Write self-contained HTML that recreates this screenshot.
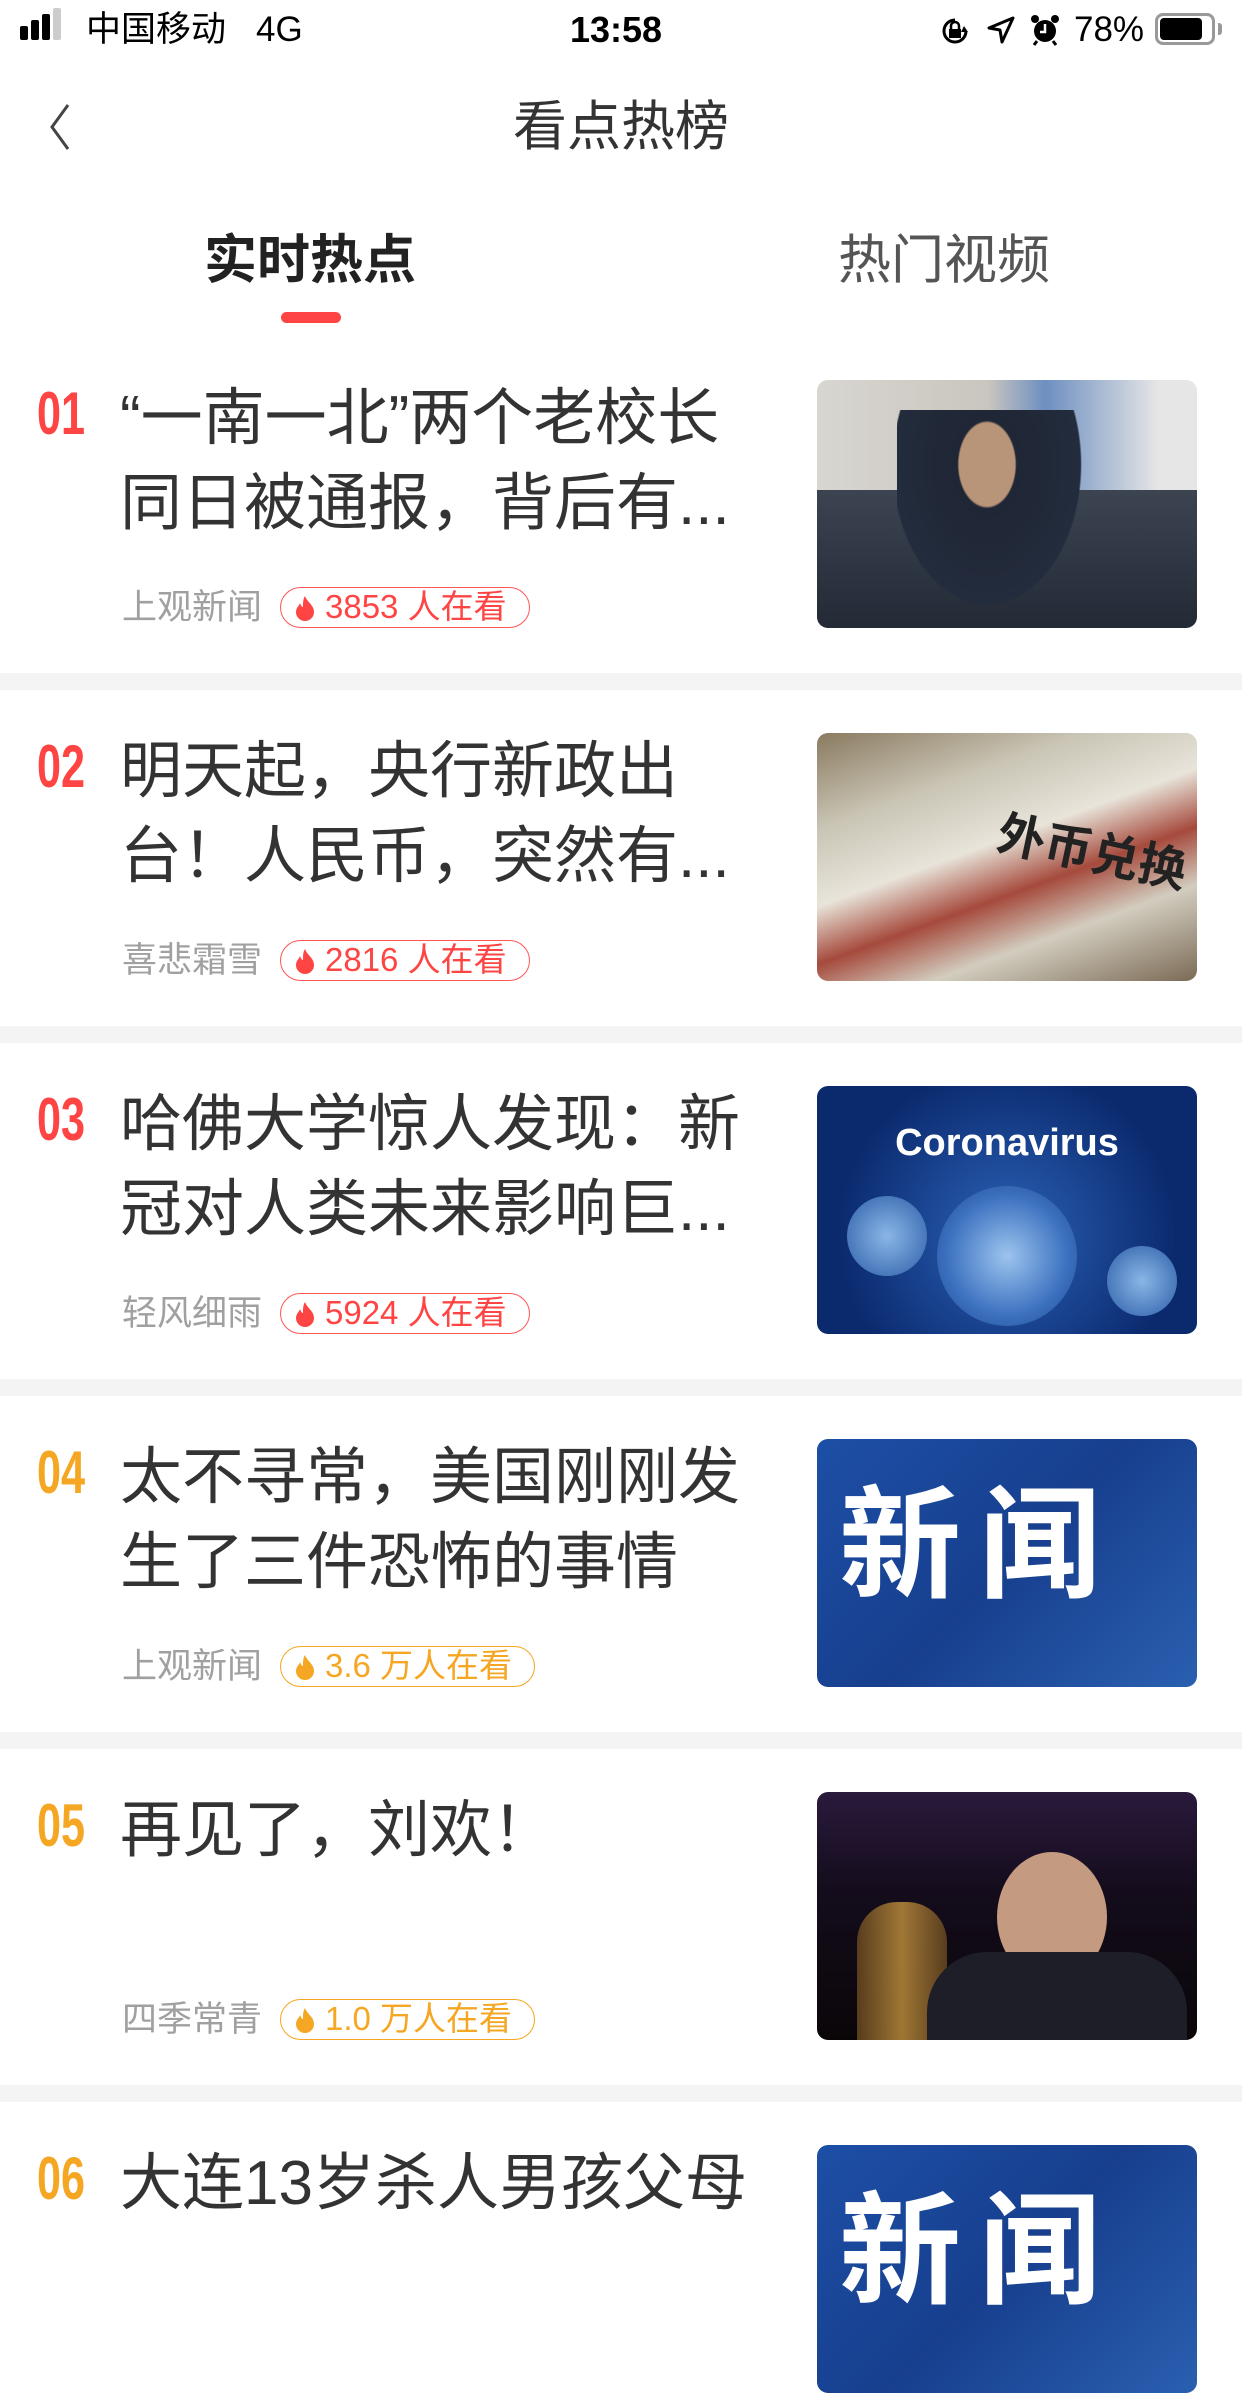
<!DOCTYPE html>
<html><head><meta charset="utf-8">
<style>
*{margin:0;padding:0;box-sizing:border-box}
body{width:1242px;height:2208px;overflow:hidden;background:#fff;font-family:"Liberation Sans","Noto Sans CJK SC",sans-serif;color:#333;position:relative}
.abs{position:absolute}
.sb{font-size:35px;color:#000;top:8px;line-height:44px}
.rank{position:absolute;left:37px;font-size:60px;line-height:60px;font-weight:bold;font-family:"Liberation Sans",sans-serif;transform:scaleX(.72);transform-origin:left top}
.title{position:absolute;left:120px;width:680px;font-size:62px;line-height:85px;color:#333;white-space:nowrap}
.src{position:absolute;left:122px;font-size:35px;color:#a0a0a0;line-height:41px}
.badge{position:absolute;left:280px;height:41px;border:1.5px solid;border-radius:21px;font-size:33px;line-height:38px;padding-left:44px;padding-right:22px;white-space:nowrap}
.badge svg{position:absolute;left:13px;top:7px}
.img{position:absolute;left:817px;width:380px;height:248px;border-radius:11px;overflow:hidden}
.sep{position:absolute;left:0;width:1242px;height:17px;background:#f4f4f4}
.red{color:#f44}.org{color:#f5a623}
.bred{border-color:#f55;color:#f44}.borg{border-color:#f5a623;color:#f5a623}
</style></head><body>
<!-- status bar -->
<div class="abs" style="left:20px;top:26px;width:8px;height:14px;background:#000;border-radius:2px"></div>
<div class="abs" style="left:31px;top:20px;width:8px;height:20px;background:#000;border-radius:2px"></div>
<div class="abs" style="left:42px;top:14px;width:8px;height:26px;background:#000;border-radius:2px"></div>
<div class="abs" style="left:53px;top:8px;width:8px;height:32px;background:#ccc;border-radius:2px"></div>
<div class="abs sb" style="left:86px">中国移动</div>
<div class="abs sb" style="left:256px">4G</div>
<div class="abs sb" style="left:570px;font-weight:bold;font-size:36px">13:58</div>
<svg class="abs" style="left:938px;top:14px" width="34" height="34" viewBox="0 0 34 34"><path d="M28 17A11 11 0 1 1 17 6" fill="none" stroke="#000" stroke-width="3"/><path d="M26 12l4 6-7 0z" fill="#000"/><rect x="11" y="15" width="12" height="9" fill="#000"/><path d="M13 15v-3a4 4 0 0 1 8 0v3" fill="none" stroke="#000" stroke-width="2.5"/></svg>
<svg class="abs" style="left:986px;top:15px" width="30" height="30" viewBox="0 0 30 30"><path d="M27 3L3 13l11 2 2 12z" fill="none" stroke="#000" stroke-width="3" stroke-linejoin="round"/></svg>
<svg class="abs" style="left:1030px;top:13px" width="30" height="34" viewBox="0 0 30 34"><circle cx="15" cy="18" r="11" fill="#000"/><circle cx="5" cy="6" r="4" fill="#000"/><circle cx="25" cy="6" r="4" fill="#000"/><path d="M15 11v8h-5" stroke="#fff" stroke-width="2.5" fill="none"/><path d="M7 28l-3 4M23 28l3 4" stroke="#000" stroke-width="3"/></svg>
<div class="abs sb" style="left:1074px">78%</div>
<div class="abs" style="left:1155px;top:13px;width:60px;height:32px;border:3px solid #999;border-radius:8px"></div>
<div class="abs" style="left:1160px;top:18px;width:42px;height:22px;background:#000;border-radius:4px"></div>
<div class="abs" style="left:1218px;top:23px;width:4px;height:12px;background:#999;border-radius:0 3px 3px 0"></div>
<!-- nav -->
<svg class="abs" style="left:44px;top:102px" width="30" height="50" viewBox="0 0 30 50"><path d="M24 3L8 25l16 22" fill="none" stroke="#444" stroke-width="3"/></svg>
<div class="abs" style="left:0;width:1242px;top:92px;text-align:center;font-size:54px;line-height:70px;color:#333">看点热榜</div>
<!-- tabs -->
<div class="abs" style="left:204px;top:226px;font-size:53px;line-height:70px;font-weight:bold;color:#222">实时热点</div>
<div class="abs" style="left:838px;top:226px;font-size:53px;line-height:70px;color:#555">热门视频</div>
<div class="abs" style="left:281px;top:312px;width:60px;height:11px;background:#f44;border-radius:6px"></div>

<!-- item 1 -->
<div class="rank red" style="top:384px">01</div>
<div class="title" style="top:376px">“一南一北”两个老校长<br>同日被通报，背后有...</div>
<div class="src" style="top:587px">上观新闻</div>
<div class="badge bred" style="top:587px"><svg width="22" height="26" viewBox="0 0 22 26"><path d="M11 1C13 7 20 10 20 17a9 9 0 0 1-18 0c0-4 3-6 4-9 1 3 2 4 3 4 0-4 0-8 2-11z" fill="currentColor"/></svg>3853 人在看</div>
<div class="img" style="top:380px;background:linear-gradient(90deg,#d8d6d0 0%,#c9c6bf 45%,#6d8fc0 60%,#e6e6e6 90%)"><div class="abs" style="left:0;top:110px;width:380px;height:138px;background:linear-gradient(180deg,#3c4452,#232a36)"></div><div class="abs" style="left:80px;top:30px;width:200px;height:218px;background:radial-gradient(ellipse at 45% 25%,#b89478 0 18%,#1f2635 19%,#232c3d 60%,transparent 61%)"></div></div>
<div class="sep" style="top:673px"></div>

<!-- item 2 -->
<div class="rank red" style="top:737px">02</div>
<div class="title" style="top:729px">明天起，央行新政出<br>台！人民币，突然有...</div>
<div class="src" style="top:940px">喜悲霜雪</div>
<div class="badge bred" style="top:940px"><svg width="22" height="26" viewBox="0 0 22 26"><path d="M11 1C13 7 20 10 20 17a9 9 0 0 1-18 0c0-4 3-6 4-9 1 3 2 4 3 4 0-4 0-8 2-11z" fill="currentColor"/></svg>2816 人在看</div>
<div class="img" style="top:733px;background:linear-gradient(160deg,#8a7a60 0%,#c9c4b4 25%,#e8e4da 45%,#a54a3c 60%,#d2cdbf 75%,#7b6a55 100%)"><div class="abs" style="left:180px;top:80px;font-size:48px;color:#222;font-weight:bold;transform:rotate(12deg);white-space:nowrap">外币兑换</div></div>
<div class="sep" style="top:1026px"></div>

<!-- item 3 -->
<div class="rank red" style="top:1090px">03</div>
<div class="title" style="top:1082px">哈佛大学惊人发现：新<br>冠对人类未来影响巨...</div>
<div class="src" style="top:1293px">轻风细雨</div>
<div class="badge bred" style="top:1293px"><svg width="22" height="26" viewBox="0 0 22 26"><path d="M11 1C13 7 20 10 20 17a9 9 0 0 1-18 0c0-4 3-6 4-9 1 3 2 4 3 4 0-4 0-8 2-11z" fill="currentColor"/></svg>5924 人在看</div>
<div class="img" style="top:1086px;background:radial-gradient(circle at 50% 60%,#2b62b8,#0b2a6e 70%)"><div class="abs" style="left:0;width:380px;top:36px;text-align:center;color:#fff;font-size:38px;font-weight:bold">Coronavirus</div><div class="abs" style="left:120px;top:100px;width:140px;height:140px;border-radius:50%;background:radial-gradient(circle,#9cc4ee,#3d72c0 60%,#1a4590)"></div><div class="abs" style="left:30px;top:110px;width:80px;height:80px;border-radius:50%;background:radial-gradient(circle,#8ab6e6,#2c5ea8)"></div><div class="abs" style="left:290px;top:160px;width:70px;height:70px;border-radius:50%;background:radial-gradient(circle,#8ab6e6,#2c5ea8)"></div></div>
<div class="sep" style="top:1379px"></div>

<!-- item 4 -->
<div class="rank org" style="top:1443px">04</div>
<div class="title" style="top:1435px">太不寻常，美国刚刚发<br>生了三件恐怖的事情</div>
<div class="src" style="top:1646px">上观新闻</div>
<div class="badge borg" style="top:1646px"><svg width="22" height="26" viewBox="0 0 22 26"><path d="M11 1C13 7 20 10 20 17a9 9 0 0 1-18 0c0-4 3-6 4-9 1 3 2 4 3 4 0-4 0-8 2-11z" fill="currentColor"/></svg>3.6 万人在看</div>
<div class="img" style="top:1439px;background:linear-gradient(135deg,#1d4fa6,#173f8e 50%,#2a5fb0)"><div class="abs" style="left:22px;top:42px;font-size:122px;font-weight:bold;color:#fff;letter-spacing:18px;line-height:130px">新闻</div></div>
<div class="sep" style="top:1732px"></div>

<!-- item 5 -->
<div class="rank org" style="top:1796px">05</div>
<div class="title" style="top:1788px">再见了，刘欢！</div>
<div class="src" style="top:1999px">四季常青</div>
<div class="badge borg" style="top:1999px"><svg width="22" height="26" viewBox="0 0 22 26"><path d="M11 1C13 7 20 10 20 17a9 9 0 0 1-18 0c0-4 3-6 4-9 1 3 2 4 3 4 0-4 0-8 2-11z" fill="currentColor"/></svg>1.0 万人在看</div>
<div class="img" style="top:1792px;background:linear-gradient(180deg,#2a1a3c 0%,#140c1c 40%,#0a0608 100%)"><div class="abs" style="left:40px;top:110px;width:90px;height:138px;background:linear-gradient(90deg,#6a4a20,#c4923e,#6a4a20);border-radius:40px 40px 0 0;opacity:.8"></div><div class="abs" style="left:180px;top:60px;width:110px;height:130px;border-radius:50%;background:#c49a80"></div><div class="abs" style="left:110px;top:160px;width:260px;height:100px;border-radius:60px 60px 0 0;background:#1e1e28"></div></div>
<div class="sep" style="top:2085px"></div>

<!-- item 6 -->
<div class="rank org" style="top:2149px">06</div>
<div class="title" style="top:2141px">大连13岁杀人男孩父母</div>
<div class="img" style="top:2145px;background:linear-gradient(135deg,#1d4fa6,#173f8e 50%,#2a5fb0)"><div class="abs" style="left:22px;top:42px;font-size:122px;font-weight:bold;color:#fff;letter-spacing:18px;line-height:130px">新闻</div></div>
</body></html>
